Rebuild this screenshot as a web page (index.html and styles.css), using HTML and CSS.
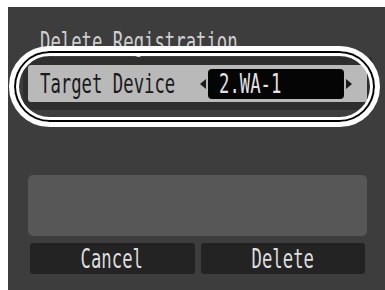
FILE: index.html
```html
<!DOCTYPE html>
<html>
<head>
<meta charset="utf-8">
<link rel="stylesheet" href="styles.css">
</head>
<body>
<div class="panel">
  <div class="title"><span class="txt">Delete Registration</span></div>
  <div class="band">
    <div class="row">
      <span class="label"><span class="txt">Target Device</span></span>
      <span class="arrow arrow-left"></span>
      <span class="value"><span class="txt">2.WA-1</span></span>
      <span class="arrow arrow-right"></span>
    </div>
  </div>
  <div class="oval"></div>
  <div class="msgbox"></div>
  <div class="buttons">
    <div class="btn"><span class="txt">Cancel</span></div>
    <div class="btn"><span class="txt">Delete</span></div>
  </div>
</div>
</body>
</html>
```

FILE: styles.css
```css
html, body {
  margin: 0;
  padding: 0;
  background: #ffffff;
}
body {
  padding: 7px 0 0 8px;
  font-family: "DejaVu Sans Mono", "Liberation Mono", monospace;
}
.panel {
  position: relative;
  width: 377px;
  height: 283px;
  background: #3d3d3d;
  overflow: hidden;
  display: flex;
  flex-direction: column;
}
.txt {
  display: inline-block;
  font-size: 27px;
  transform: scaleX(0.64);
  transform-origin: left center;
  white-space: nowrap;
}
.title {
  margin: 23px 0 0 32px;
  height: 24px;
  line-height: 24px;
  color: #cfcfcf;
}
.band {
  margin: 3px 13px 0 15px;
  padding: 8px 5px;
  background: #2e2e2e;
}
.row {
  height: 37px;
  background: #b9b9b9;
  border-radius: 3px;
  display: flex;
  align-items: center;
  padding: 0 15px 0 12px;
  color: #1a1a1a;
}
.label {
  flex: 1;
  min-width: 0;
  line-height: 30px;
  height: 30px;
}
.arrow {
  flex: none;
  width: 0;
  height: 0;
  border-top: 5px solid transparent;
  border-bottom: 5px solid transparent;
}
.arrow-left {
  border-right: 6px solid #1a1a1a;
  margin-right: 2px;
}
.arrow-right {
  border-left: 6px solid #1a1a1a;
  margin-left: 2px;
}
.value {
  flex: none;
  box-sizing: border-box;
  width: 136px;
  height: 30px;
  line-height: 30px;
  background: #050505;
  border-radius: 4px;
  padding-left: 11px;
  color: #e2e2e2;
  overflow: hidden;
}
.oval {
  position: absolute;
  left: 1px;
  top: 39px;
  width: 371px;
  height: 81px;
  box-sizing: border-box;
  border: 5px solid #ffffff;
  border-radius: 41px;
  box-shadow: inset 0 0 0 2px #000000, inset 0 0 0 5px #ffffff;
}
.msgbox {
  margin: 65px 18px 0 20px;
  height: 61px;
  background: #575757;
  border-radius: 5px;
}
.buttons {
  margin: 7px 20px 0 22px;
  display: grid;
  grid-template-columns: 1fr 1fr;
  gap: 6px;
}
.btn {
  height: 31px;
  line-height: 31px;
  background: #232323;
  border-radius: 3px;
  text-align: center;
  color: #dedede;
}
.btn .txt {
  transform-origin: center center;
}
```
